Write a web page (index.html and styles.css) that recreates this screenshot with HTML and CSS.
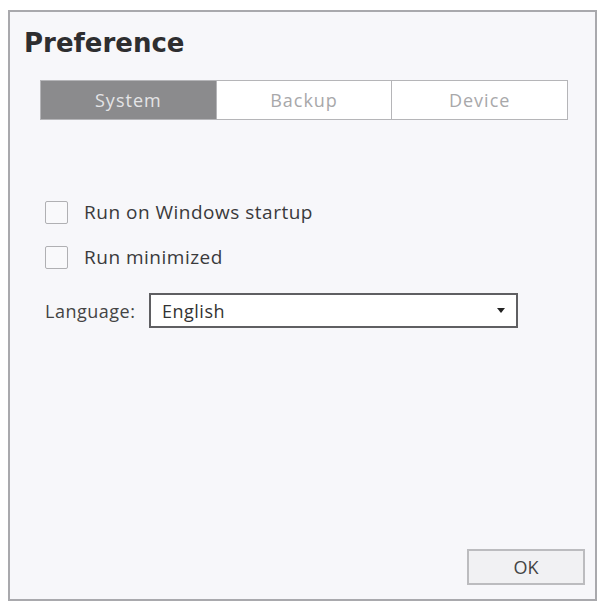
FILE: index.html
```html
<!DOCTYPE html>
<html>
<head>
<meta charset="utf-8">
<link rel="stylesheet" href="styles.css">
</head>
<body>
<div class="dialog">
  <h1 class="title">Preference</h1>
  <div class="tabs">
    <div class="tab active">System</div>
    <div class="tab">Backup</div>
    <div class="tab">Device</div>
  </div>
  <div class="content">
    <label class="check"><span class="box"></span><span>Run on Windows startup</span></label>
    <label class="check"><span class="box"></span><span>Run minimized</span></label>
    <div class="lang">
      <span class="lang-label">Language:</span>
      <div class="select"><span>English</span><span class="arrow"></span></div>
    </div>
  </div>
  <div class="footer">
    <div class="ok">OK</div>
  </div>
</div>
</body>
</html>
```
FILE: styles.css
```css
html, body { margin: 0; padding: 0; background: #ffffff; }
body { padding: 10px 10px 6px 8px; font-family: "Open Sans", "Liberation Sans", sans-serif; color: #333; }
.dialog {
  width: 585px;
  height: 587px;
  border: 2px solid #a9a9ad;
  background: #f7f7fa;
  display: flex;
  flex-direction: column;
  box-sizing: content-box;
}
.title {
  margin: 16px 0 0 14px;
  font-family: "DejaVu Sans", sans-serif;
  font-weight: bold;
  font-size: 26px;
  line-height: 30px;
  color: #2e2e30;
}
.tabs {
  display: flex;
  margin: 22px 0 0 30px;
  width: 528px;
  height: 40px;
  border: 1px solid #b5b5b8;
  box-sizing: border-box;
  background: #fff;
}
.tab {
  flex: 1;
  display: flex;
  align-items: center;
  justify-content: center;
  font-size: 18px;
  letter-spacing: 1px;
  color: #a8a8aa;
  border-left: 1px solid #b5b5b8;
}
.tab:first-child { border-left: none; }
.tab.active { background: #8b8b8d; color: #e4e4e6; }
.content { padding: 79px 0 0 35px; display: flex; flex-direction: column; }
.check { display: flex; align-items: center; gap: 16px; font-size: 19px; letter-spacing: 0.5px; color: #3a3a3c; height: 26px; margin-bottom: 19px; }
.box { width: 23px; height: 23px; border: 1px solid #b0b0b3; background: #f9f9fb; box-sizing: border-box; border-radius: 2px; }
.lang { display: flex; align-items: center; margin-top: 4px; }
.lang-label { font-size: 18px; letter-spacing: 0.5px; color: #444; width: 104px; }
.select {
  width: 369px;
  height: 35px;
  box-sizing: border-box;
  border: 2px solid #5f5f62;
  background: #fff;
  display: flex;
  align-items: center;
  justify-content: space-between;
  padding: 0 11px 0 11px;
  font-size: 18px;
  letter-spacing: 0.5px;
  color: #333;
}
.arrow { width: 0; height: 0; border-left: 4px solid transparent; border-right: 4px solid transparent; border-top: 5px solid #222; }
.footer { margin-top: auto; display: flex; justify-content: flex-end; padding: 0 10px 14px 0; }
.ok {
  width: 118px;
  height: 36px;
  box-sizing: border-box;
  border: 2px solid #bcbcbf;
  background: #f1f1f3;
  display: flex;
  align-items: center;
  justify-content: center;
  font-size: 18px;
  color: #444;
}
```
